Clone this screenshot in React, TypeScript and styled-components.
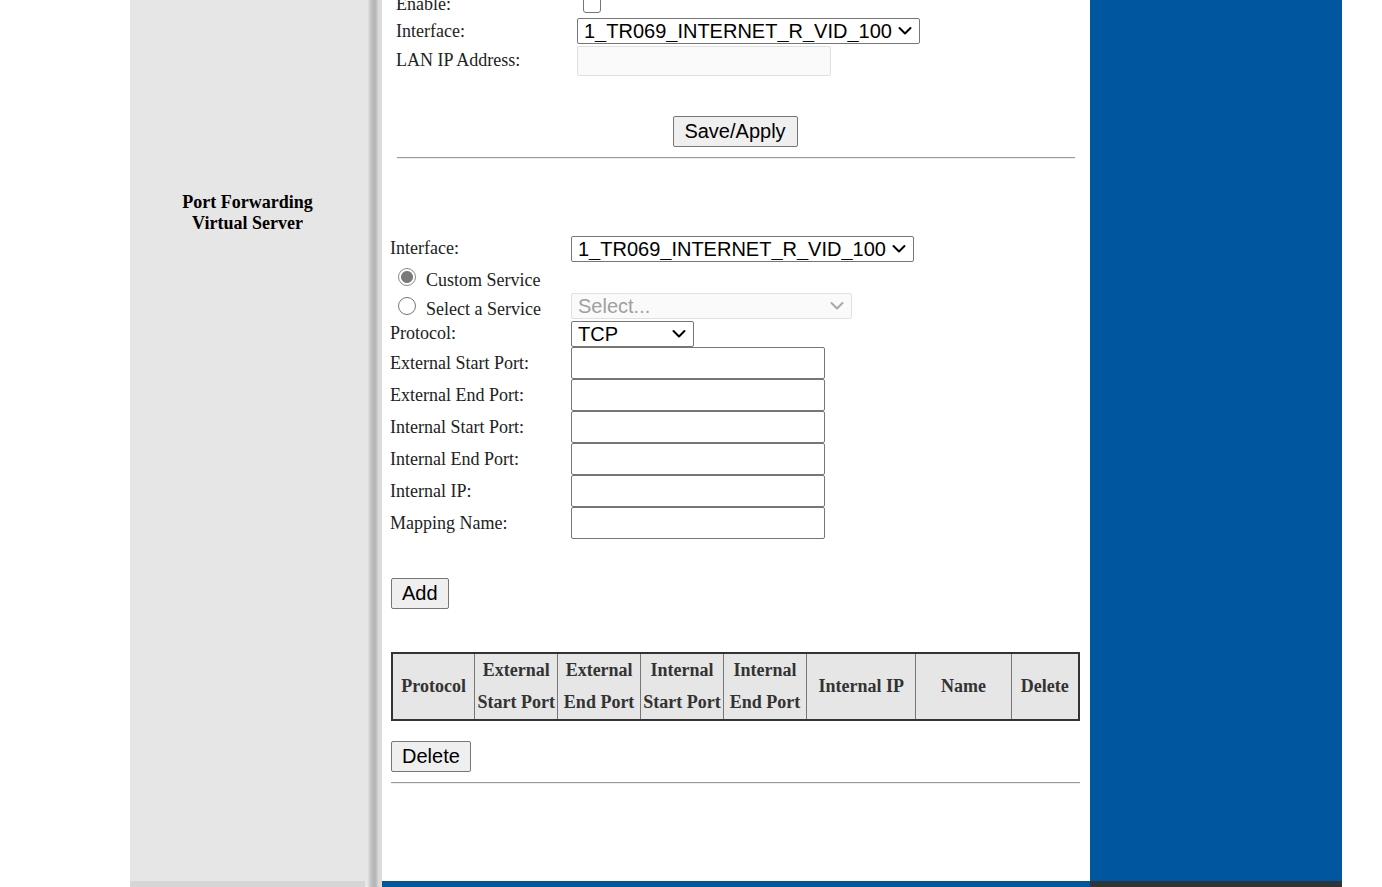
import React from 'react';
import styled, { createGlobalStyle } from 'styled-components';

const Global = createGlobalStyle`
  html, body { margin: 0; padding: 0; background: #fff; overflow: hidden; }
  body { font-family: "Liberation Serif", "Times New Roman", serif; color: #222; }
  * { box-sizing: border-box; }
`;

const Page = styled.div`
  display: grid;
  grid-template-columns: 130px 235px 17px 708px 252px 1fr;
  grid-template-rows: 881px 6px;
  width: 1382px;
  height: 887px;
`;

const Blank = styled.div<{ $col: number }>`
  grid-column: ${(p) => p.$col};
  grid-row: 1 / span 2;
  background: #fff;
`;

const Sidebar = styled.aside`
  grid-column: 2;
  grid-row: 1;
  background: #e6e6e6;
  padding-top: 192px;
  text-align: center;
  font-weight: bold;
  font-size: 18px;
  line-height: 21px;
  color: #000;
`;

const Separator = styled.div`
  grid-column: 3;
  grid-row: 1 / span 2;
  background: linear-gradient(
    to right,
    #e6e6e6 0px,
    #e9e9e9 2px,
    #d8d8d8 4px,
    #c2c2c2 6px,
    #b4b4b4 10px,
    #c6c6c6 12px,
    #dadada 13px,
    #dcdcdc 17px
  );
`;

const Content = styled.main`
  grid-column: 4;
  grid-row: 1;
  background: #fff;
  overflow: hidden;
`;

const BlueColumn = styled.div`
  grid-column: 5;
  grid-row: 1;
  background: #01579f;
`;

const Strip = styled.div<{ $col: number; $color: string }>`
  grid-column: ${(p) => p.$col};
  grid-row: 2;
  background: ${(p) => p.$color};
`;

const TopForm = styled.section`
  margin: -9px 15px 0 14px;
`;

const LowerForm = styled.section`
  margin-top: 76px;
  padding-left: 8px;
`;

const Row = styled.div<{ $h: number }>`
  display: flex;
  align-items: center;
  height: ${(p) => p.$h}px;
`;

const Label = styled.label<{ $w: number }>`
  width: ${(p) => p.$w}px;
  flex-shrink: 0;
  font-size: 18px;
  line-height: 21px;
  color: #222;
  white-space: nowrap;
`;

const RadioLabel = styled.label`
  width: 181px;
  flex-shrink: 0;
  display: flex;
  align-items: center;
  gap: 10px;
  padding-left: 8px;
  font-size: 18px;
  line-height: 21px;
  color: #222;
  white-space: nowrap;
`;

const RadioText = styled.span`
  padding-top: 6px;
`;

const Radio = styled.input.attrs({ type: 'radio' })`
  appearance: none;
  width: 18px;
  height: 18px;
  margin: 0;
  border-radius: 50%;
  border: 1px solid #767676;
  background: #fff;
  &:checked {
    border-color: #8a8a8a;
    background: radial-gradient(circle, #7a7a7a 0 5.5px, #fff 6.5px);
  }
`;

const Checkbox = styled.input.attrs({ type: 'checkbox' })`
  appearance: none;
  width: 18px;
  height: 18px;
  margin: 0 0 0 6px;
  border-radius: 3px;
  border: 1px solid #767676;
  background: #fff;
`;

const SelectWrap = styled.span<{ $w: number }>`
  position: relative;
  display: inline-flex;
  width: ${(p) => p.$w}px;
  height: 26px;
`;

const Select = styled.select`
  appearance: none;
  width: 100%;
  height: 100%;
  font-family: "Liberation Sans", Arial, sans-serif;
  font-size: 20px;
  color: #000;
  background: #fff;
  border: 1px solid #767676;
  border-radius: 2px;
  padding: 0 24px 0 6px;
  &:disabled {
    color: #a0a0a0;
    border-color: #e0e0e0;
    background: #fafafa;
    opacity: 1;
  }
`;

const Chevron = styled.svg<{ $muted?: boolean }>`
  position: absolute;
  right: 8px;
  top: 50%;
  transform: translateY(-50%);
  width: 14px;
  height: 9px;
  pointer-events: none;
  stroke: ${(p) => (p.$muted ? '#a8a8a8' : '#000')};
`;

const TextInput = styled.input<{ $h: number }>`
  width: 254px;
  height: ${(p) => p.$h}px;
  margin: 0;
  border: 1px solid #767676;
  border-radius: 2px;
  background: #fff;
  font-family: "Liberation Sans", Arial, sans-serif;
  font-size: 16px;
  &:disabled {
    border-color: #e0e0e0;
    background: #fafafa;
  }
`;

const Button = styled.button`
  height: 31px;
  padding: 0 10px;
  font-family: "Liberation Sans", Arial, sans-serif;
  font-size: 20px;
  color: #000;
  background: #efefef;
  border: 1px solid #767676;
  border-radius: 2px;
`;

const WideButton = styled(Button)`
  padding: 0 11px 0 10px;
`;

const CenterRow = styled.div<{ $top: number }>`
  display: flex;
  justify-content: center;
  margin-top: ${(p) => p.$top}px;
`;

const StartRow = styled.div<{ $top: number }>`
  display: flex;
  margin: ${(p) => p.$top}px 0 0 1px;
`;

const Rule = styled.hr<{ $top: number; $w?: number }>`
  margin: ${(p) => p.$top}px 0 0 1px;
  width: ${(p) => (p.$w ? `${p.$w}px` : 'auto')};
  height: 0;
  border: none;
  border-top: 1px solid #9a9a9a;
  border-bottom: 1px solid #eeeeee;
`;

const Table = styled.table`
  margin: 43px 0 0 1px;
  width: 689px;
  border-collapse: collapse;
  border: 2px solid #333;
`;

const Th = styled.th<{ $w: number }>`
  width: ${(p) => p.$w}px;
  padding: 0 1px 1px;
  background: #e6e6e6;
  border: 1px solid #777;
  font-size: 18px;
  font-weight: bold;
  line-height: 32px;
  color: #333;
  text-align: center;
  white-space: nowrap;
`;

const columns: { w: number; lines: string[] }[] = [
  { w: 83, lines: ['Protocol'] },
  { w: 83, lines: ['External', 'Start Port'] },
  { w: 83, lines: ['External', 'End Port'] },
  { w: 83, lines: ['Internal', 'Start Port'] },
  { w: 83, lines: ['Internal', 'End Port'] },
  { w: 110, lines: ['Internal IP'] },
  { w: 96, lines: ['Name'] },
  { w: 68, lines: ['Delete'] },
];

const portFields = [
  'External Start Port:',
  'External End Port:',
  'Internal Start Port:',
  'Internal End Port:',
  'Internal IP:',
  'Mapping Name:',
];

function DropDown({
  w,
  options,
  disabled,
}: {
  w: number;
  options: string[];
  disabled?: boolean;
}) {
  return (
    <SelectWrap $w={w}>
      <Select disabled={disabled} defaultValue={options[0]}>
        {options.map((o) => (
          <option key={o} value={o}>
            {o}
          </option>
        ))}
      </Select>
      <Chevron $muted={disabled} viewBox="0 0 14 9" fill="none" strokeWidth={2}>
        <path d="M1.5 1.5 L7 7 L12.5 1.5" strokeLinecap="round" strokeLinejoin="round" />
      </Chevron>
    </SelectWrap>
  );
}

export default function App() {
  return (
    <>
      <Global />
      <Page>
        <Blank $col={1} />
        <Sidebar>
          Port Forwarding
          <br />
          Virtual Server
        </Sidebar>
        <Separator />
        <Content>
          <TopForm>
            <Row $h={26}>
              <Label $w={181}>Enable:</Label>
              <Checkbox />
            </Row>
            <Row $h={28}>
              <Label $w={181}>Interface:</Label>
              <DropDown w={343} options={['1_TR069_INTERNET_R_VID_100']} />
            </Row>
            <Row $h={31}>
              <Label $w={181}>LAN IP Address:</Label>
              <TextInput $h={30} disabled />
            </Row>
            <CenterRow $top={40}>
              <WideButton>Save/Apply</WideButton>
            </CenterRow>
            <Rule $top={10} />
          </TopForm>
          <LowerForm>
            <Row $h={27}>
              <Label $w={181}>Interface:</Label>
              <DropDown w={343} options={['1_TR069_INTERNET_R_VID_100']} />
            </Row>
            <Row $h={30}>
              <RadioLabel>
                <Radio name="svc" defaultChecked />
                <RadioText>Custom Service</RadioText>
              </RadioLabel>
            </Row>
            <Row $h={28}>
              <RadioLabel>
                <Radio name="svc" />
                <RadioText>Select a Service</RadioText>
              </RadioLabel>
              <DropDown w={281} options={['Select...']} disabled />
            </Row>
            <Row $h={27}>
              <Label $w={181}>Protocol:</Label>
              <DropDown w={123} options={['TCP', 'UDP']} />
            </Row>
            {portFields.map((f) => (
              <Row $h={32} key={f}>
                <Label $w={181}>{f}</Label>
                <TextInput $h={32} />
              </Row>
            ))}
            <StartRow $top={39}>
              <Button>Add</Button>
            </StartRow>
            <Table>
              <thead>
                <tr>
                  {columns.map((c, i) => (
                    <Th $w={c.w} key={i}>
                      {c.lines.map((l, j) => (
                        <React.Fragment key={j}>
                          {j > 0 && <br />}
                          {l}
                        </React.Fragment>
                      ))}
                    </Th>
                  ))}
                </tr>
              </thead>
            </Table>
            <StartRow $top={20}>
              <Button>Delete</Button>
            </StartRow>
            <Rule $top={10} $w={689} />
          </LowerForm>
        </Content>
        <BlueColumn />
        <Blank $col={6} />
        <Strip $col={2} $color="#d6d6d6" />
        <Strip $col={4} $color="#01579f" />
        <Strip $col={5} $color="#333333" />
      </Page>
    </>
  );
}
